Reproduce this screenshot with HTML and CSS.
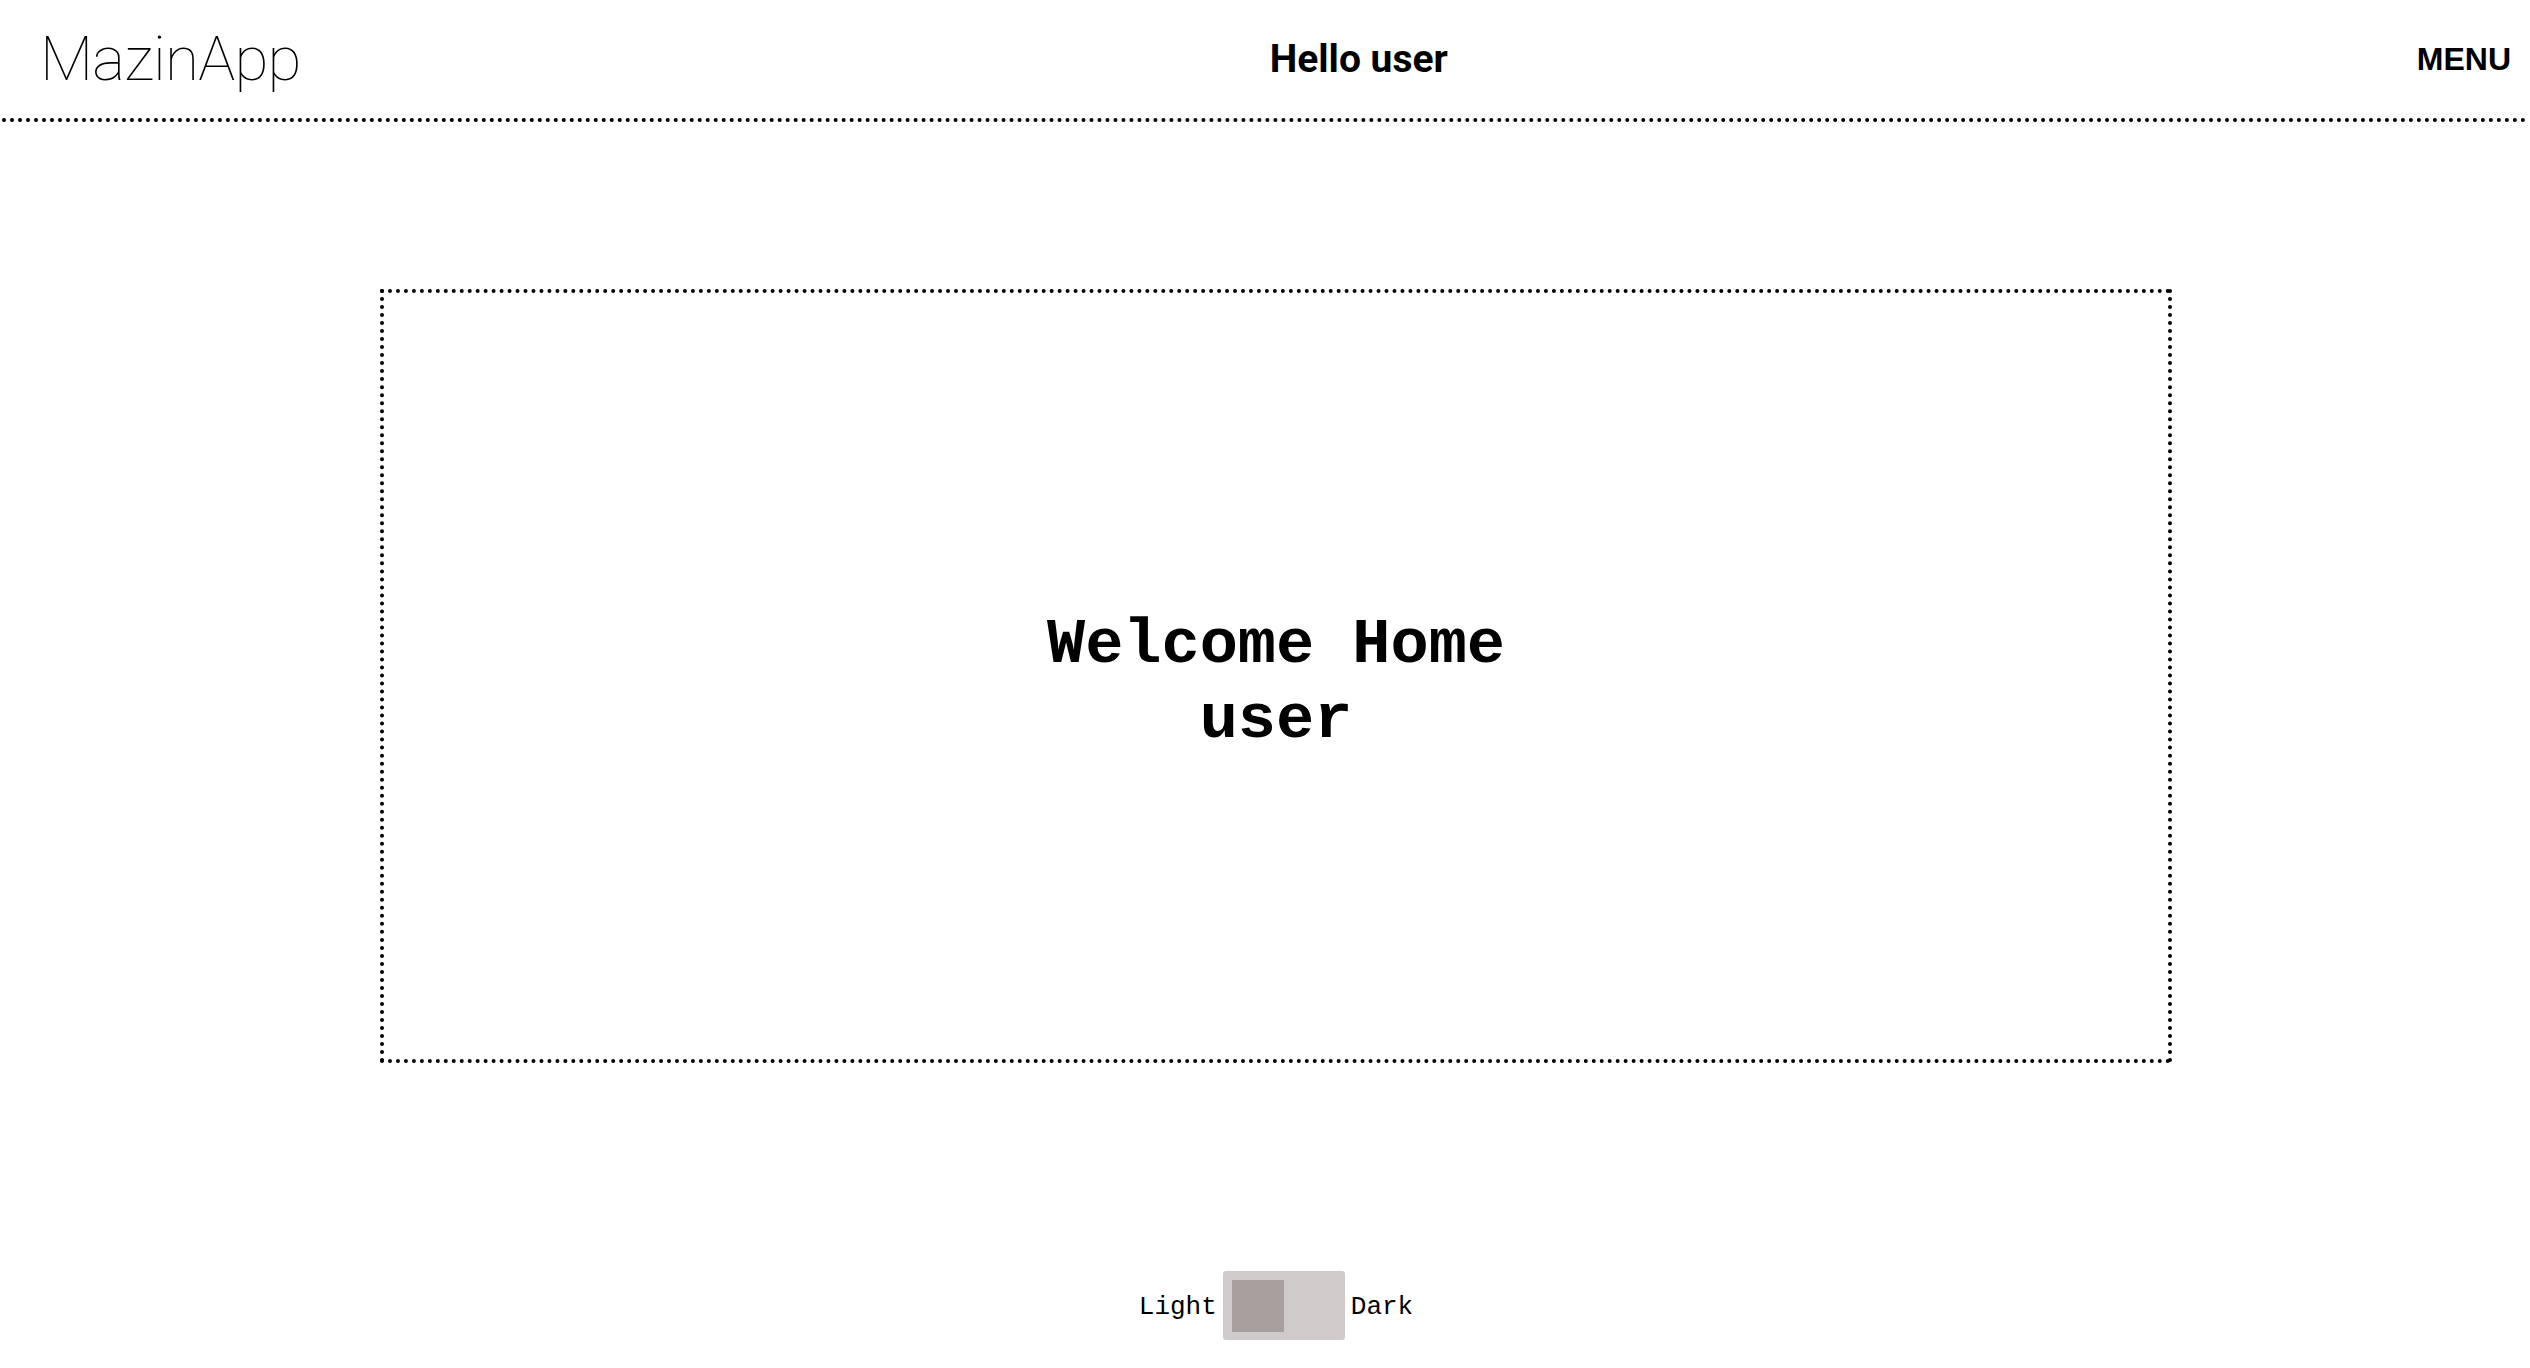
FILE: index.html
```html
<!DOCTYPE html>
<html lang="en">
<head>
<meta charset="utf-8">
<title>MazinApp</title>
<link rel="stylesheet" href="styles.css">
</head>
<body>
<header class="topbar">
  <a class="logo" href="#">MazinApp</a>
  <h2 class="greeting">Hello user</h2>
  <button class="menu-btn" type="button">MENU</button>
</header>
<main class="content">
  <section class="welcome-box">
    <h1 class="welcome-text">Welcome Home<br>user</h1>
  </section>
  <div class="theme-toggle">
    <span class="theme-label">Light</span>
    <span class="switch"><span class="knob"></span></span>
    <span class="theme-label">Dark</span>
  </div>
</main>
</body>
</html>
```

FILE: styles.css
```css
html, body {
  margin: 0;
  padding: 0;
  background: #ffffff;
  color: #000000;
}

body {
  font-family: "Liberation Mono", "Courier New", monospace;
}

.topbar {
  display: flex;
  align-items: center;
  justify-content: space-between;
  height: 118px;
  margin: 0 2px;
  padding: 0 17px 0 38px;
  border-bottom: 4px dotted #000;
}

.logo {
  font-family: "Roboto", "Helvetica Neue", sans-serif;
  font-weight: 100;
  font-size: 62px;
  letter-spacing: -0.8px;
  color: #000;
  text-decoration: none;
  line-height: 1;
}

.greeting {
  margin: 0;
  font-family: "Roboto", "Helvetica Neue", sans-serif;
  font-weight: 700;
  font-size: 39px;
  line-height: 1;
}

.menu-btn {
  background: none;
  border: none;
  padding: 0;
  font-family: "Liberation Sans", Arial, sans-serif;
  font-weight: 700;
  font-size: 32px;
  color: #000;
  cursor: pointer;
  line-height: 1;
}

.content {
  display: flex;
  flex-direction: column;
  align-items: stretch;
  padding: 167px 358px 0 380px;
}

.welcome-box {
  height: 766px;
  border: 4px dotted #000;
  display: flex;
  align-items: center;
  justify-content: center;
}

.welcome-text {
  margin: 14px 0 0 0;
  font-family: "Liberation Mono", "Courier New", monospace;
  font-weight: 700;
  font-size: 63.6px;
  line-height: 75px;
  text-align: center;
}

.theme-toggle {
  display: flex;
  align-items: center;
  justify-content: center;
  gap: 6px;
  margin-top: 208px;
}

.theme-label {
  font-family: "Liberation Mono", "Courier New", monospace;
  font-size: 26px;
  padding-top: 3px;
}

.switch {
  display: flex;
  align-items: center;
  box-sizing: border-box;
  width: 122px;
  height: 69px;
  padding: 0 9px;
  background: #cfcbcb;
  border-radius: 3px;
}

.knob {
  width: 52px;
  height: 52px;
  background: #a89f9f;
}
```
